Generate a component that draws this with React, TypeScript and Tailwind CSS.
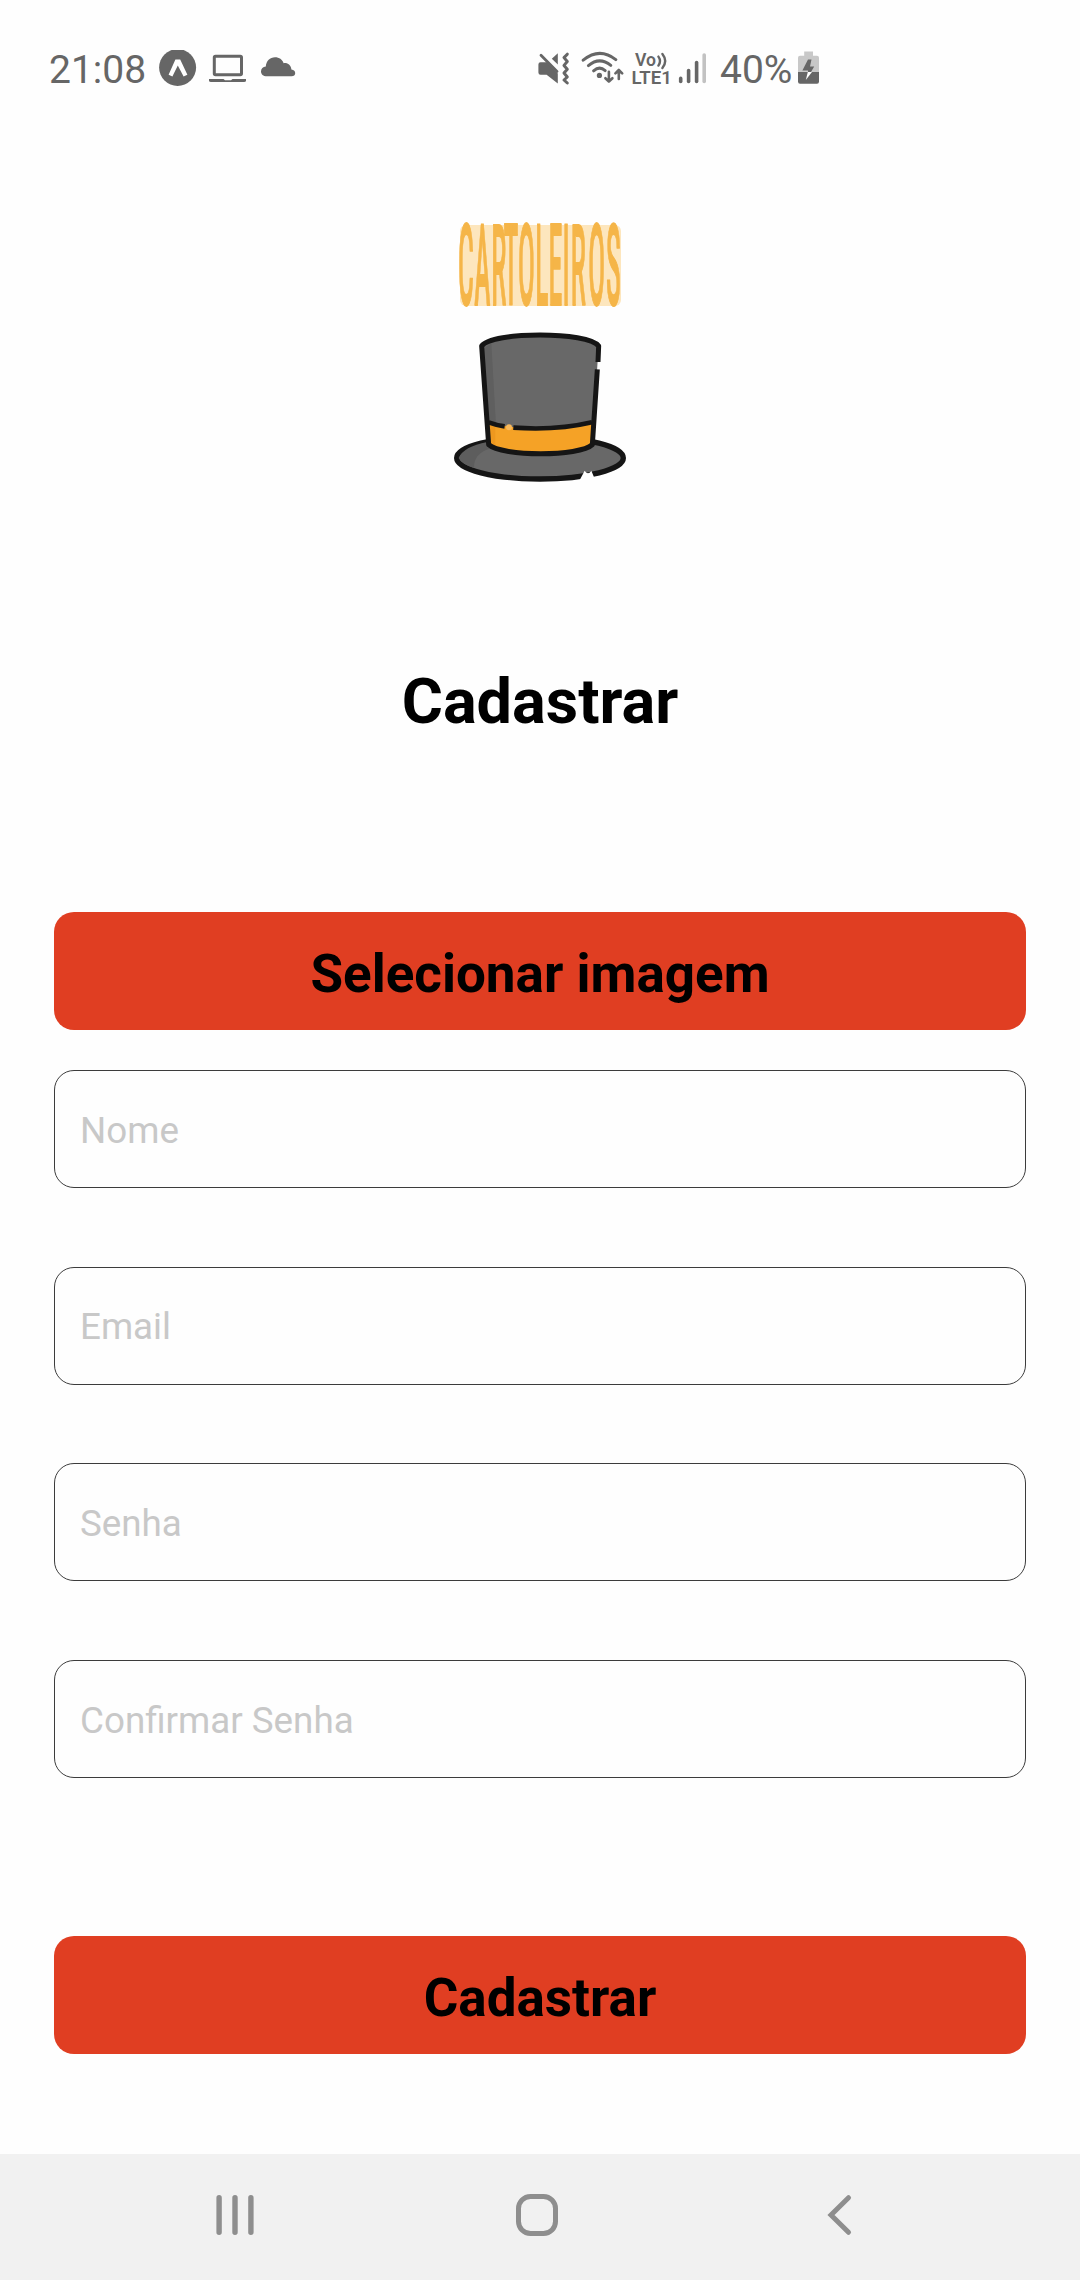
import React from "react";

const INK = "#666666";

function NotificationIcons() {
  return (
    <svg className="ml-[12px] h-[40px] w-[140px]" viewBox="158 50 140 40" fill={INK}>
      <circle cx="177.6" cy="67.5" r="18.5" />
      <path
        d="M175.4 59.6 H180.2 L187.4 74.8 L183.6 76.6 L177.8 65.6 L172.4 76.6 L168.6 74.8 Z"
        fill="#fff"
      />
      <rect x="214.3" y="56.3" width="27.2" height="18.4" rx="1.2" fill="none" stroke={INK} strokeWidth="3" />
      <path d="M209 79 H246 V80.5 Q246 82 244 82 H211 Q209 82 209 80.5 Z" />
      <path d="M223.5 79 H232.5 L231 80.2 H225 Z" fill="#fff" />
      <path d="M267 76.3 C263 76.3 261 74 261 71.4 C261 68.6 263 66.8 265.8 66.4 C266.2 61 270 57.3 275 57.3 C279.3 57.3 282.3 59.6 283.6 63.2 C287.8 62.6 291 65.4 291.4 69.6 C294 70 295.2 71.4 295.2 73.2 C295.2 75 293.8 76.3 291.6 76.3 Z" />
    </svg>
  );
}

function SystemIcons() {
  return (
    <svg className="h-[40px] w-[172px]" viewBox="536 50 172 40" fill="none" stroke={INK}>
      {/* muted speaker with vibration */}
      <path d="M540.5 62.2 H547 L557.8 73.5 V83.4 L546.6 74.8 H540.5 Q538.4 74.8 538.4 72.6 V64.4 Q538.4 62.2 540.5 62.2 Z" fill={INK} stroke="none" />
      <path d="M557.8 53.2 V64.4 L551.8 58.8 Z" fill={INK} stroke="none" />
      <path d="M541 55.2 L557 71.6" strokeWidth="2.8" strokeLinecap="round" />
      <path d="M567.3 54.2 L564 57.6 L567.3 61.5 L564 65.4 L567.3 69.2 L564 73 L567.3 77 L564 80 L567.3 83" strokeWidth="3" strokeLinecap="round" strokeLinejoin="round" />
      {/* wifi */}
      <g strokeWidth="3" strokeLinecap="round">
        <path d="M583.2 60.2 Q599.5 46.8 615.8 59.6" />
        <path d="M588.4 65.6 Q599.5 56.2 610.8 65.4" />
        <path d="M593.6 70.8 Q599.5 65.6 605.2 70.6" />
      </g>
      <circle cx="599.4" cy="75.4" r="2.6" fill={INK} stroke="none" />
      <g strokeWidth="2.6" strokeLinecap="round" strokeLinejoin="round">
        <path d="M608.9 71.8 V81.4 M605.4 78.2 L608.9 81.6 L612.4 78.2" />
        <path d="M618.8 79 V70 M615.4 73.4 L618.8 70 L622.2 73.4" />
      </g>
      {/* VoLTE */}
      <g fill={INK} stroke="none" fontFamily="Roboto, sans-serif" fontWeight="600">
        <text x="635" y="66.2" fontSize="18" textLength="21" lengthAdjust="spacingAndGlyphs">Vo</text>
        <text x="631.4" y="83.8" fontSize="18.4" textLength="40.5" lengthAdjust="spacingAndGlyphs">LTE1</text>
      </g>
      <g strokeWidth="2.4" strokeLinecap="round">
        <path d="M658.4 56.6 Q661.6 61 658.4 65.6" />
        <path d="M662.4 54 Q668 61 662.4 68" />
      </g>
      {/* signal */}
      <g strokeWidth="3.6" strokeLinecap="round">
        <path d="M680.7 78.4 V81.4" />
        <path d="M688.6 70.6 V81.4" />
        <path d="M696.6 62.6 V81.4" />
        <path d="M704.2 55 V81.4" stroke="#c2c2c2" />
      </g>
    </svg>
  );
}

function BatteryIcon() {
  return (
    <svg className="ml-[3px] h-[40px] w-[24px]" viewBox="797 50 24 40">
      <path d="M804.2 51.4 H813 V55.8 H817 Q819 55.8 819 57.8 V73 H798 V57.8 Q798 55.8 800 55.8 H804.2 Z" fill="#c8c8c8" />
      <path d="M798 72 H819 V81.6 Q819 83.8 817 83.8 H800 Q798 83.8 798 81.6 Z" fill={INK} />
      <path d="M808 59.5 H811.5 L810 66.5 H814.2 L811 72 H808 V70.5 H802.4 Z" fill={INK} />
      <path d="M807.8 72 H812 L805.8 80 Z" fill="#fff" />
    </svg>
  );
}

function Logo() {
  return (
    <svg
      className="mt-[60px] h-[310px] w-[220px] self-center blur-[0.7px]"
      viewBox="430 200 220 310"
      role="img"
      aria-label="Cartoleiros"
    >
      <rect x="460" y="225" width="161" height="81" rx="6" fill="#fde6bd" />
      <g transform="translate(0 305.2) scale(1 4.78)">
        <text
          x="458.2 474.4 491.4 503.8 518.2 535.6 548.8 562.8 571 588.6 606.2"
          y="0"
          fontFamily="Roboto, sans-serif"
          fontWeight="500"
          fontSize="23.6"
          fill="#f5b548"
          stroke="#f5b548"
          strokeWidth="1.4"
          strokeLinejoin="round"
          style={{ vectorEffect: "non-scaling-stroke" }}
        >
          CARTOLEIROS
        </text>
      </g>
      <g transform="translate(430 310) scale(0.33333)" strokeLinecap="butt" strokeLinejoin="round">
        <ellipse cx="330" cy="444" rx="250" ry="63" fill="#686868" stroke="#151515" strokeWidth="16" />
        <path d="M86 444 Q100 410 172 396 L184 414 Q130 430 132 474 Q98 464 86 444 Z" fill="#5d5d5d" />
        <path d="M155 108 C185 64 475 64 506 108 L486 404 C450 440 210 440 176 404 Z" fill="#686868" />
        <path d="M160 116 L184 100 L198 345 L178 340 Z" fill="#5f5f5f" />
        <path d="M176 340 Q330 372 486 340 L485 402 C445 438 215 438 178 402 Z" fill="#f5a226" />
        <path d="M176 340 L196 347 V414 L178 402 Z" fill="#ee981f" />
        <path d="M176 337 Q200 346 224 349 M250 353 Q380 362 486 337" fill="none" stroke="#151515" strokeWidth="14" />
        <path d="M504 156 L506 108 C475 64 185 64 155 108 L176 404 C215 440 450 440 487 404 L502 178" fill="none" stroke="#151515" strokeWidth="15" />
        <path d="M464 482 Q474 498 484 482 L494 506 L448 512 Z" fill="#fff" stroke="none" />
        <circle cx="237" cy="352" r="9" fill="#f8b95c" />
      </g>
    </svg>
  );
}

function SystemStatus() {
  return (
    <div className="ml-[238px] flex items-center">
      <SystemIcons />
      <span className="ml-[12px] w-[74px] whitespace-nowrap">40%</span>
      <BatteryIcon />
    </div>
  );
}

function Button({ children }: { children: React.ReactNode }) {
  return (
    <button className="flex h-[118px] w-full shrink-0 items-center justify-center rounded-[20px] bg-[#e03e22] pt-[7px] text-[53px] leading-none font-bold text-black">
      {children}
    </button>
  );
}

function Field({ label }: { label: string }) {
  return (
    <div className="flex h-[118px] items-center rounded-[20px] border border-[#3c3c3c] pl-[25px] text-[36.75px] leading-none text-[#c8c8c8]">
      <span className="pt-[4px]">{label}</span>
    </div>
  );
}

export default function App() {
  return (
    <div className="flex h-[2280px] w-[1080px] flex-col overflow-hidden bg-[#fefefe] font-[Roboto,sans-serif]">
      <header className="flex h-[140px] shrink-0 items-center pl-[49px] text-[39px] leading-none text-[#666666]">
        <span className="w-[97px]">21:08</span>
        <NotificationIcons />
        <SystemStatus />
      </header>

      <main className="flex flex-1 flex-col px-[54px]">
        <Logo />
        <h1 className="mt-[155px] self-center text-[63px] leading-[74px] font-bold text-black">Cadastrar</h1>
        <div className="mt-[173px]">
          <Button>Selecionar imagem</Button>
        </div>
        <div className="mt-[40px] flex h-[708px] flex-col justify-between">
          <Field label="Nome" />
          <Field label="Email" />
          <Field label="Senha" />
          <Field label="Confirmar Senha" />
        </div>
        <div className="mt-[158px]">
          <Button>Cadastrar</Button>
        </div>
      </main>

      <nav className="flex h-[126px] shrink-0 items-center bg-[#f1f1f1] pb-[6px] pl-[210px]">
        <svg className="h-[50px] w-[50px]" viewBox="0 0 50 50" stroke="#8e8e8e" strokeWidth="5.4" strokeLinecap="round">
          <path d="M9.1 8.7 V43.3 M25 8.7 V43.3 M40.9 8.7 V43.3" />
        </svg>
        <svg className="ml-[252px] h-[50px] w-[50px]" viewBox="0 0 50 50" fill="none" stroke="#8e8e8e" strokeWidth="5">
          <rect x="6.5" y="7.5" width="37" height="37" rx="12" />
        </svg>
        <svg className="ml-[253px] h-[50px] w-[50px]" viewBox="0 0 50 50" fill="none" stroke="#8e8e8e" strokeWidth="5" strokeLinecap="round">
          <path d="M33.5 8.7 L16 26 L33.5 43.3" />
        </svg>
      </nav>
    </div>
  );
}
